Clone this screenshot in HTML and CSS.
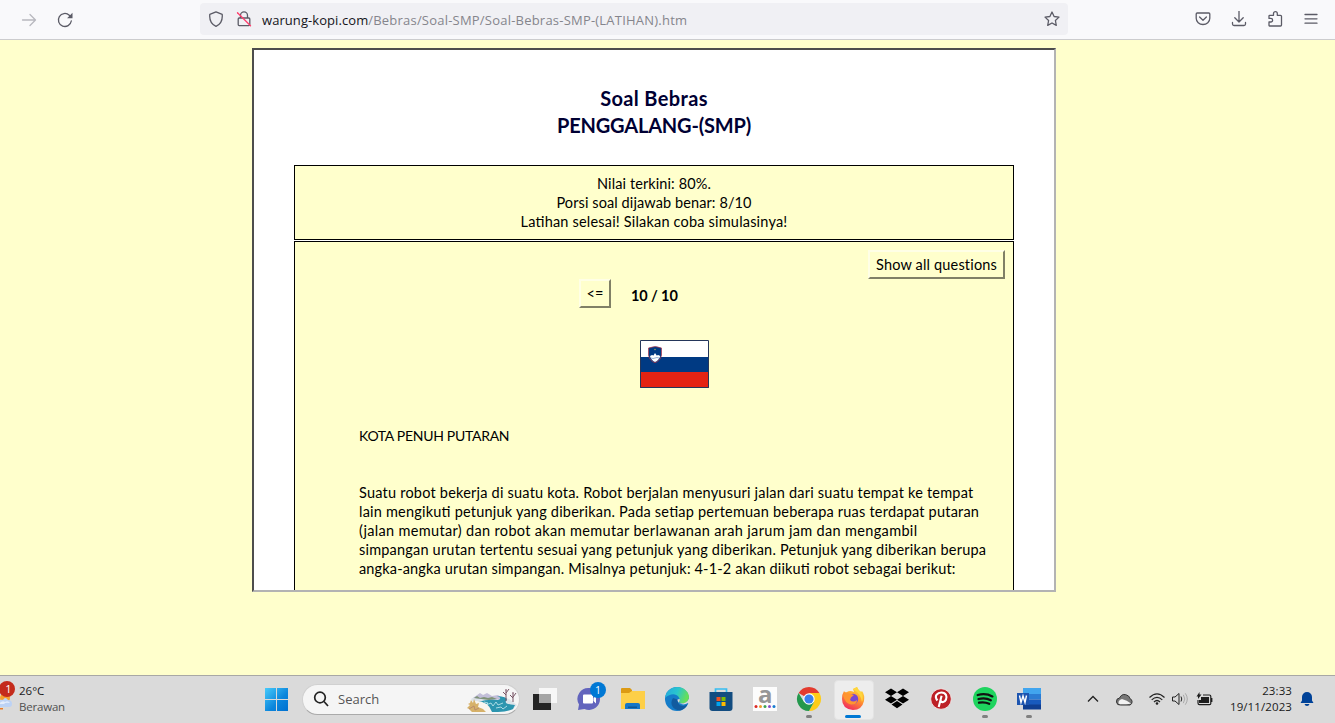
FILE: index.html
```html
<!DOCTYPE html>
<html lang="id">
<head>
<meta charset="utf-8">
<title>Soal Bebras</title>
<link rel="stylesheet" href="styles.css">
</head>
<body>
<div class="screen">
  <header class="toolbar">
    <div class="nav-buttons">
      <svg class="icon forward" viewBox="0 0 16 16"><path d="M1.5 8h13M9 2.5 14.5 8 9 13.5"/></svg>
      <svg class="icon" viewBox="0 0 16 16"><path d="M14.300 9a6.500 6.500 0 1 1-2-5.800l1.400 1.300"/><path class="solid" d="M15.500.8v5.400h-5.400z"/></svg>
    </div>
    <div class="address-bar">
      <svg class="icon" viewBox="0 0 16 16"><path d="M8 .9 14.200 3.400c.5 5.200-1.200 9.600-6.200 11.900C3 13 1.300 8.600 1.800 3.400z"/></svg>
      <svg class="icon lock" viewBox="0 0 16 16"><path d="M4.500 7V4.400a3.500 3.500 0 0 1 7 0V7M3.200 7h9.600q1 0 1 1v5.600q0 1-1 1H3.200q-1 0-1-1V8q0-1 1-1z"/><path class="slash" d="m1.500 1.800 13 13"/></svg>
      <span class="url"><span class="host">warung-kopi.com</span><span class="path">/Bebras/Soal-SMP/Soal-Bebras-SMP-(LATIHAN).htm</span></span>
      <svg class="icon star" viewBox="0 0 16 16"><path d="m8 1 2.100 4.500 4.900.6-3.600 3.400.9 4.900L8 12l-4.300 2.400.9-4.900L1 6.100l4.900-.6z"/></svg>
    </div>
    <div class="tools">
      <svg class="icon" viewBox="0 0 16 16"><path d="M2.200 2h11.600q1 0 1 1v4.200a6.800 6.300 0 0 1-13.600 0V3q0-1 1-1zM4.600 6 8 9.200 11.400 6"/></svg>
      <svg class="icon" viewBox="0 0 16 16"><path d="M8 0v11M3.800 6.800 8 11l4.200-4.200M1.500 11.500v1.500q0 1.500 1.500 1.500h10q1.500 0 1.500-1.500v-1.500"/></svg>
      <svg class="icon" viewBox="0 0 16 16"><path d="M2.500 15q-.5 0-.5-.5V11h1.800a1.800 1.800 0 0 0 0-3.600H2V5q0-.7.7-.7h3.800V2.600a1.900 1.900 0 0 1 3.800 0v1.700h3.200q1 0 1 1V14q0 1-1 1z"/></svg>
      <svg class="icon" viewBox="0 0 16 16"><path d="M2 3.500h12M2 7.800h12M2 12.200h12"/></svg>
    </div>
  </header>

  <main class="page">
    <div class="frame">
      <h1 class="title"><span class="t1">Soal Bebras</span><br><span class="t2">PENGGALANG-(SMP)</span></h1>
      <section class="score"><span class="s1">Nilai terkini: 80%.</span><br><span class="s2">Porsi soal dijawab benar: 8/10</span><br><span class="s3">Latihan selesai! Silakan coba simulasinya!</span></section>
      <section class="quiz">
        <div class="quiz-top"><button class="btn show-all">Show all questions</button></div>
        <div class="quiz-nav"><button class="btn prev">&lt;=</button><b class="counter">10 / 10</b></div>
        <svg class="flag" viewBox="0 0 69 48">
          <path fill="#fff" d="M0 0h69v17H0z"/><path fill="#003a83" d="M0 17h69v15H0z"/><path fill="#e42313" d="M0 32h69v16H0z"/>
          <path fill="#003a83" stroke="#b63649" stroke-width=".7" d="M8.500 8q7-3 13 0v7q-1 6-6.500 7.700Q9.500 21 8.500 15z"/>
          <path fill="#fff" d="m10 16 2-1 1.500.5L15 13l1.700 2.500 1.500-.5 2 1q-1 4-5.200 6-4-2-5-6z"/><path d="M11 18q2 1 4 0t4 0" fill="none" stroke="#678bbb" stroke-width=".7"/><circle cx="15" cy="9.500" r=".7" fill="#b7b04e"/>
          <path fill="none" stroke="#24365a" d="M.5.5h68v47H.5z"/>
        </svg>
        <div class="question">
          <p class="q-title">KOTA PENUH PUTARAN</p>
          <p class="q-text"><span class="l1">Suatu robot bekerja di suatu kota. Robot berjalan menyusuri jalan dari suatu tempat ke tempat</span><br><span class="l2">lain mengikuti petunjuk yang diberikan. Pada setiap pertemuan beberapa ruas terdapat putaran</span><br><span class="l3">(jalan memutar) dan robot akan memutar berlawanan arah jarum jam dan mengambil</span><br><span class="l4">simpangan urutan tertentu sesuai yang petunjuk yang diberikan. Petunjuk yang diberikan berupa</span><br><span class="l5">angka-angka urutan simpangan. Misalnya petunjuk: 4-1-2 akan diikuti robot sebagai berikut:</span></p>
        </div>
      </section>
    </div>
  </main>

  <footer class="taskbar">
    <div class="weather">
      <svg class="cloud" viewBox="0 0 14 30"><circle cx="5" cy="16" r="5" fill="#f5a030"/><path fill="#bcd2f5" d="M-2 25v-6q4-2 5-1 2-4 5 0 4 0 4 4 0 3-3 3z"/><path fill="#e4edfc" d="M-1 22q3-4 6-2 3-2 5 1-5-1-6 1z"/><path fill="#ec7a25" d="M0 26h3v1.500H0z"/><circle cx="7" cy="7" r="8" fill="#c42b1c"/><text x="5.200" y="11">1</text></svg>
      <div class="weather-text"><span class="temp">26°C</span><span class="cond">Berawan</span></div>
    </div>
    <div class="apps">
      <div class="slot"><svg class="app" viewBox="0 0 24 24"><defs><linearGradient id="win" gradientUnits="userSpaceOnUse" x1="0" y1="0" x2="24" y2="24"><stop stop-color="#4cd0fd"/><stop offset=".6" stop-color="#0c86dc"/><stop offset="1" stop-color="#0070d0"/></linearGradient></defs><path fill="url(#win)" d="M1 1h11v11H1zM13 1h11v11H13zM1 13h11v11H1zM13 13h11v11H13z"/></svg></div>
      <div class="search">
        <svg class="lens" viewBox="0 0 16 16"><circle cx="7" cy="6.500" r="5.300"/><path d="m11 10.500 4 4.500"/></svg>
        <span class="search-label">Search</span>
        <svg class="river" viewBox="0 0 52 26">
          <path fill="#dce3e9" d="M5 12 14 7l7 2 12 0 10 3 8 6-5 5H12z"/>
          <path fill="#c2bed8" d="m7 11 7-5 3 2 4-2 5 3 6-1 5 4-13 1z"/><path fill="#7f9377" d="m8 11 3-2 3 2 4-1 4 1 4-1 5 2-8 1z"/>
          <path fill="#2c95af" d="M12 15q9-3 20-2 5-2-1-4 13 1 9 5-2 3 9 4l-2 4q-6 3-15 3H22l-3-4q4-4-7-6z"/>
          <path fill="none" stroke="#b7e2e9" stroke-width=".9" d="m18 15 4 1-2 2 5-2 2 3 3-4 2 3 5-2m-7 5 5-1 2 2 4-3"/>
          <path fill="#f8f5ef" d="M8 14q14-1 18 11H12Q5 22 3 18z"/>
          <path fill="#d6b169" d="m5 13 2 3 1-4 2 5 3-1-1 4 5 2 3 3H6l-3-3-2-1 3-3-2-1 2-1z"/><path d="m3 22 5-3 1 4 4-2" fill="none" stroke="#b98c6b"/>
          <path fill="none" stroke="#765363" stroke-width="1" d="M40 14V3m0 5-3-3m3 1 3-4M47 15V6m0 5-3-3m3 2 3-4"/><circle cx="40" cy="3" r="1" fill="#a28995"/><circle cx="47" cy="6" r="1" fill="#a28995"/>
        </svg>
      </div>
      <div class="slot"><svg class="app" viewBox="0 0 24 24"><path fill="#242424" d="M0 7h18v16H0z"/><path fill="#fafafa" fill-opacity=".9" d="M6 1h18v15H6z"/><path fill="#a5a5a5" d="M6 7h12v9H6z"/></svg></div>
      <div class="slot"><svg class="app" viewBox="0 0 24 24"><path fill="#6264bd" d="M12.500 1a11 11 0 1 1-5 21L1 23l1-5.500A11 11 0 0 1 12.500 1z"/><path fill="#fff" d="M7 7.500h8q1 0 1 1v7q0 1-1 1H7q-1 0-1-1v-7q0-1 1-1zM16.500 11 19 8.500v8L16.500 14z"/></svg><span class="badge">1</span></div>
      <div class="slot"><svg class="app" viewBox="0 0 24 24"><path fill="#dc9a13" d="M1 1h8l2 2v4H0V2q0-1 1-1z"/><path fill="#fdcf48" d="M0 6h8l3-2h13v18H0z"/><path fill="#1676c8" d="M4 22v-4q0-2 2-2h11q2 0 2 2v4z"/><path fill="#0f5694" d="M7 19.500h9v1.500H7z"/></svg></div>
      <div class="slot"><svg class="app" viewBox="0 0 24 24"><defs><linearGradient id="edge" x2="1" y2=".3"><stop stop-color="#25a5df"/><stop offset=".55" stop-color="#29c6ce"/><stop offset="1" stop-color="#66df59"/></linearGradient></defs><circle cx="12" cy="12" r="12" fill="#147cc9"/><path fill="#125b9f" d="M8 11c-4 6 0 12 7 12.500 4-1 6-3 7.500-6-5 3-10 1-10-5z"/><path fill="url(#edge)" d="M0 11C1 4 6 0 12 0c7 0 12 5 12 10 0 6-7 8-10 5 3-6-6-12-14-4z"/><path fill="#dadada" d="M12.500 12.500q0 3 3 4.300 4 1.500 7.500-.8l1 .5 0-5q-2 5-8 5-2.500-.3-2-1.500 1-1 .7-3z"/></svg></div>
      <div class="slot"><svg class="app" viewBox="0 0 24 24"><path fill="none" stroke="#37bdf1" stroke-width="1.700" d="M6.500 6V2h11v4"/><path fill="#124c80" d="M0.500 5h23v16q0 3-3 3h-17q-3 0-3-3z"/><path fill="#f25022" d="M7.500 10h4v4h-4z"/><path fill="#7fba00" d="M12.500 10h4v4h-4z"/><path fill="#00a4ef" d="M7.500 15h4v4h-4z"/><path fill="#ffb900" d="M12.500 15h4v4h-4z"/></svg></div>
      <div class="slot"><svg class="app" viewBox="0 0 24 24"><path fill="#fcfcfc" d="M0 0h24v24H0z"/><text class="letter-a" x="5" y="15.500">a</text><circle cx="3" cy="19.500" r="1.500" fill="#dc2924"/><circle cx="7.500" cy="19.500" r="1.500" fill="#ef9b28"/><circle cx="12" cy="19.500" r="1.500" fill="#3da354"/><circle cx="16.500" cy="19.500" r="1.500" fill="#8c4bc8"/><circle cx="21" cy="19.500" r="1.500" fill="#177bd0"/></svg></div>
      <div class="slot running"><svg class="app" viewBox="0 0 24 24"><path fill="#e33b2e" d="M12 12 1.600 6A12 12 0 0 1 22.400 6z"/><path fill="#fdcc18" d="M12 12V6h10.400A12 12 0 0 1 12 24l5-9z"/><path fill="#24984d" d="m12 12 5 3-5 9A12 12 0 0 1 1.600 6L7 15z"/><circle cx="12" cy="12" r="5.700" fill="#fff"/><circle cx="12" cy="12" r="4.600" fill="#3980ed"/></svg></div>
      <div class="slot active"><svg class="app" viewBox="0 0 24 24"><defs><linearGradient id="fox" x1=".8" x2=".3" y2="1"><stop stop-color="#ffe43b"/><stop offset=".5" stop-color="#ff922f"/><stop offset="1" stop-color="#f12860"/></linearGradient></defs><path fill="url(#fox)" d="M3 4q1 2 3 1 3-2 7 0l-1-3 4-2q1 3 4 5l1-1q3 4 2 10-2 9-11 9Q1 22 1 12 1 7 3 4z"/><circle cx="12" cy="12" r="5.200" fill="#7947d2"/><path fill="#ff9530" d="M2 8q5-3 11 0l-3 2.500-1 2.500q3 3 7 0 0 5-6 4.500-6-1-8-9.500z"/><path fill="#fed63e" d="M12 2l4-2q1 3 4 5 3 5 1 10-1-8-9-13z"/></svg></div>
      <div class="slot"><svg class="app" viewBox="0 0 24 24"><path d="M6 1.500 12 5.200 6 9 0 5.200zM18 1.500l6 3.700L18 9l-6-3.800zM6 9l6 3.800-6 3.700-6-3.700zM18 9l6 3.800-6 3.700-6-3.700zM12 14l5.500 3.500-5.500 3.700-5.500-3.700z"/></svg></div>
      <div class="slot"><svg class="app" viewBox="0 0 24 24"><circle cx="12" cy="12" r="10.300" fill="#bd2026" stroke="#f5eaea" stroke-width=".8"/><path fill="none" stroke="#fff" stroke-width="2.100" d="M8.400 13.500C4.500 8.500 9 5.500 12.300 5.500c5 0 6 4 4.600 7.300-1.400 3.100-5 3-5.400.4M12.600 8.800 9.700 20"/></svg></div>
      <div class="slot running"><svg class="app" viewBox="0 0 24 24"><circle cx="12" cy="12" r="12" fill="#1ed45e"/><path fill="none" stroke="#111" stroke-width="2.300" stroke-linecap="round" d="M4.700 8q8-2.200 14.700 1.400M5.500 12q6.800-1.800 12.300 1.200M6 15.700q5.600-1.200 10.200 1.100"/></svg></div>
      <div class="slot running"><svg class="app" viewBox="0 0 24 24"><path fill="#41a5ee" d="M6 1h18v6H6z"/><path fill="#2b7cd3" d="M6 7h18v5.500H6z"/><path fill="#185abd" d="M6 12.500h18V18H6z"/><path fill="#103f91" d="M6 17.500h18v5H6z"/><path fill="#1d55b0" d="M0 6h12v12H0z"/><path fill="none" stroke="#fff" stroke-width="1.400" d="m2.500 8.500 1.500 7 2-6.500 2 6.500 1.500-7"/></svg></div>
    </div>
    <div class="tray">
      <svg class="chev" viewBox="0 0 12 8"><path d="m1 6.500 5-5 5 5"/></svg>
      <svg class="onedrive" viewBox="0 0 18 13"><path fill="#777" stroke="#333" d="M4.500 12A3.500 3.500 0 0 1 3.500 5q3-6 9-2 1 1 1.300 2.500A3.500 3.500 0 0 1 14 12z"/><path fill="#f2f2f2" d="M2.500 10.500Q2 7 6 6q5 1 9 4.500-1 1-11 .8z"/></svg>
      <svg class="wifi" viewBox="0 0 18 14"><path d="M1.500 5.500Q9-1.800 16.500 5.500M3.700 7.900q5.300-5 10.600 0M6 10q3-3 6 0"/><circle cx="9" cy="11.500" r="1.300"/></svg>
      <svg class="sound" viewBox="0 0 18 14"><path d="M1.500 5H4l4-3.500v11L4 9H1.500zM10 4.500q1.500 2.500 0 5"/><path class="faint" d="M12.300 2.800q3 4.200 0 8.400M14.300 1.300q4 5.700 0 11.400"/></svg>
      <svg class="battery" viewBox="0 0 18 14"><path fill="#1e1e1e" d="M6 5h8v6H4V8h2z"/><path fill="none" stroke="#1e1e1e" stroke-width="1.200" d="M8 3h6.500q1.300 0 1.300 1.500v7q0 1.200-1.300 1.200h-10Q3 12.700 3 11V8M16.800 6v4"/><path fill="#1e1e1e" d="M4.500 0v2.500h2L3 7V4.500H1.500z"/></svg>
      <div class="clock"><span class="time">23:33</span><span class="date">19/11/2023</span></div>
      <svg class="bell" viewBox="0 0 14 16"><path fill="#004298" d="M2 6a5 5 0 0 1 10 0v3.500l1.500 2.500H.5L2 9.500zM4.500 13h5q-.5 2-2.500 2t-2.500-2z"/></svg>
    </div>
  </footer>
</div>
</body>
</html>
```
FILE: styles.css
```css
* { box-sizing: border-box; }
body { margin: 0; font-family: Lato, "Open Sans", sans-serif; }
.screen { width: 1335px; height: 723px; display: flex; flex-direction: column; overflow: hidden; background: #ffffcc; }

/* browser toolbar */
.toolbar { height: 40px; flex: none; display: flex; align-items: flex-start; background: #f9f9fb; border-bottom: 1px solid #ccccce; font-family: "Open Sans", sans-serif; }
.icon { width: 16px; height: 16px; flex: none; fill: none; stroke: #5b5b66; stroke-width: 1.3; stroke-linejoin: round; stroke-linecap: round; }
.icon .solid { fill: #5b5b66; stroke: none; }
.icon .slash { stroke: #ff3b6b; }
.forward { stroke: #b8b8bf; }
.nav-buttons { width: 200px; padding: 12px 0 0 21px; display: flex; gap: 20px; }
.address-bar { width: 868px; height: 32px; margin-top: 3px; padding: 0 8px; display: flex; align-items: center; gap: 12px; background: #f0f0f4; border-radius: 4px; }
.url { font-size: 13px; flex: 1; margin: 1px 0 0 -2px; white-space: nowrap; color: #85858c; letter-spacing: 0.215px; }
.host { color: #15141a; letter-spacing: 0.07px; }
.tools { padding: 11px 0 0 127px; display: flex; gap: 20px; }

/* document */
.page { height: 635px; flex: none; padding-top: 8px; display: flex; justify-content: center; padding-right: 27px; }
.frame { width: 804px; height: 544px; border: 2px solid; border-color: #4d4d4d #b3b3b3 #b3b3b3 #4d4d4d; background: #fff; padding: 35px 40px 0; overflow: hidden; font-feature-settings: "liga" 1; }
.title { margin: 0 0 26px; font-size: 20px; line-height: 27px; text-align: center; color: #000033; }
.t1 { letter-spacing: 0.36px; }
.t2 { letter-spacing: -0.19px; }
.score { height: 75px; border: 1px solid #000; background: #ffffcc; padding-top: 8px; font-size: 14.5px; line-height: 19px; text-align: center; }
.s1 { letter-spacing: 0.1px; }
.s2 { letter-spacing: 0.1px; }
.s3 { letter-spacing: 0.19px; }
.quiz { height: 400px; margin-top: 1px; border: 1px solid #000; background: #ffffcc; font-size: 14.5px; line-height: 19px; }
.quiz-top { height: 37px; padding: 8px 8px 0 0; display: flex; justify-content: flex-end; }
.btn { flex: none; height: 29px; padding: 0; border: 2px solid; border-color: #ffffe6 #808066 #808066 #ffffe6; background: #ffffcc; font: 14.5px/19px Lato, sans-serif; color: #000; white-space: nowrap; }
.show-all { width: 137px; letter-spacing: 0.17px; }
.prev { width: 32px; }
.quiz-nav { height: 32px; padding-left: 284px; display: flex; gap: 20px; align-items: flex-start; }
.counter { line-height: 34px; letter-spacing: -0.1px; }
.flag { display: block; width: 69px; height: 48px; margin: 29px 0 0 345px; }
.question { padding: 38px 0 0 64px; white-space: nowrap; }
.question p { margin: 0; }
.question .q-title { font-size: 14px; letter-spacing: -0.29px; }
.question .q-text { margin-top: 38px; }
.l1 { letter-spacing: 0.215px; }
.l2 { letter-spacing: 0.21px; }
.l3 { letter-spacing: 0.33px; }
.l4 { letter-spacing: 0.195px; }
.l5 { letter-spacing: 0.155px; }

/* taskbar */
.taskbar { flex: 1; display: flex; background: #dadada; border-top: 1px solid #a8a8a5; font-family: "Open Sans", sans-serif; font-size: 11.5px; color: #1b1b1b; }
.weather { width: 254px; display: flex; gap: 5px; }
.cloud { width: 14px; height: 30px; margin-top: 6px; overflow: visible; }
.cloud text { font-size: 11px; fill: #fff; }
.weather-text { display: flex; flex-direction: column; padding-top: 7px; line-height: 16px; }
.cond { color: #505050; letter-spacing: -0.2px; }
.apps { display: flex; width: 797px; height: 47px; }
.slot { width: 44px; height: 47px; padding-bottom: 2px; flex: none; display: flex; justify-content: center; align-items: center; position: relative; }
.app { width: 24px; height: 24px; overflow: visible; }
.search { width: 218px; height: 31px; margin: 8px 3px 8px 4px; flex: none; display: flex; align-items: center; border-radius: 16px; background: #f5f5f5; border: 1px solid #d0d0d0; border-bottom-color: #aaa; padding-bottom: 2px; }
.lens { width: 16px; height: 16px; margin-left: 10px; fill: none; stroke: #222; stroke-width: 1.7; }
.search-label { margin-left: 9px; font-size: 13px; color: #555; flex: 1; }
.river { width: 52px; height: 26px; margin: 2px 1px 0 0; }
.badge { position: absolute; left: 23px; top: 6px; width: 16px; height: 16px; border-radius: 50%; background: #0078d4; color: #fff; font-size: 10.5px; line-height: 16px; text-align: center; }
.letter-a { font: bold 24px "Open Sans", sans-serif; fill: #969696; }
.running::after { content: ""; position: absolute; left: 19px; top: 39px; width: 6px; height: 3px; border-radius: 2px; background: #808080; }
.active::before { content: ""; position: absolute; left: 3px; top: 4px; width: 38px; height: 38px; border-radius: 4px; background: #ededed; border: 1px solid #e3e3e3; }
.active::after { content: ""; position: absolute; left: 14px; top: 39px; width: 16px; height: 3px; border-radius: 2px; background: #0078d4; }
.active .app { position: relative; }
.tray { flex: 1; display: flex; align-items: center; padding: 0 0 1px 36px; }
.tray svg { flex: none; }
.chev { width: 12px; height: 8px; fill: none; stroke: #222; stroke-width: 1.3; }
.onedrive { width: 18px; height: 13px; margin-left: 17px; }
.wifi { width: 18px; height: 14px; margin-left: 14px; fill: none; stroke: #222; stroke-width: 1.2; }
.wifi circle { fill: #222; stroke: none; }
.sound { width: 18px; height: 14px; margin-left: 5px; fill: none; stroke: #222; }
.sound .faint { stroke: #aaa; }
.battery { width: 18px; height: 14px; margin-left: 6px; }
.clock { width: 79px; flex: none; display: flex; flex-direction: column; align-items: flex-end; line-height: 16px; margin-top: -1px; letter-spacing: 0.1px; }
.bell { width: 14px; height: 16px; margin-left: 8px; }
```
